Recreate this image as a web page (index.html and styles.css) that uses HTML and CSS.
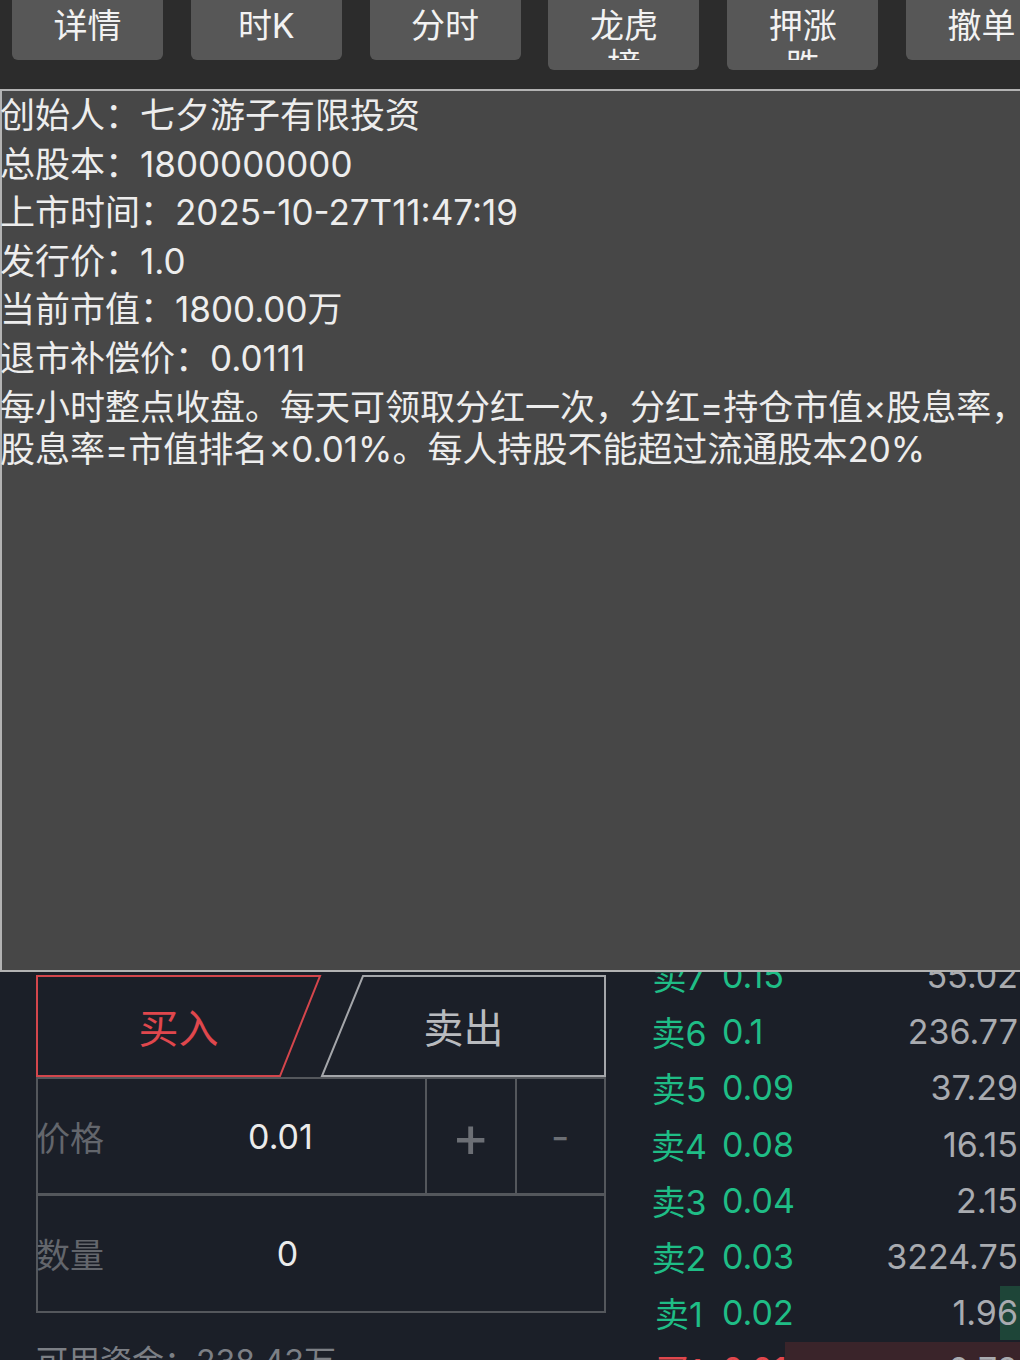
FILE: index.html
```html
<!DOCTYPE html>
<html lang="zh-CN">
<head>
    <meta charset="UTF-8">
    <meta name="viewport" content="width=device-width, initial-scale=1.0">
    <title>股票交易</title>
    <link rel="stylesheet" href="styles.css">
</head>
<body>
    <div class="toolbar">
        <div class="tool"><span>详情</span></div>
        <div class="tool"><span>时K</span></div>
        <div class="tool"><span>分时</span></div>
        <div class="tool tool-tall"><span>龙虎榜</span></div>
        <div class="tool tool-tall"><span>押涨跌</span></div>
        <div class="tool"><span>撤单</span></div>
    </div>

    <!-- chart area, covered by the detail panel -->
    <div class="chart"></div>

    <section class="trade">
        <div class="order-form">
            <div class="side-tabs">
                <svg class="side-shape" viewBox="0 0 570 102" preserveAspectRatio="none">
                    <polygon points="1,1 284,1 244,101 1,101" fill="none" stroke="#d4464c" stroke-width="2"/>
                    <polygon points="327,1 569,1 569,101 286,101" fill="none" stroke="#a4a6aa" stroke-width="2"/>
                </svg>
                <div class="side side-buy">买入</div>
                <div class="side side-sell">卖出</div>
            </div>

            <div class="field-row">
                <div class="field">
                    <span class="field-label">价格</span>
                    <span class="field-value">0.01</span>
                </div>
                <div class="step step-plus">+</div>
                <div class="step step-minus">-</div>
            </div>
            <div class="field-row field-row-last">
                <div class="field">
                    <span class="field-label">数量</span>
                    <span class="field-value field-qty">0</span>
                </div>
            </div>

            <div class="funds">可用资金：238.43万</div>
        </div>

        <div class="book">
            <div class="book-row ask"><span class="lvl">卖7</span><span class="px">0.15</span><span class="vol">55.02</span></div>
            <div class="book-row ask"><span class="lvl">卖6</span><span class="px">0.1</span><span class="vol">236.77</span></div>
            <div class="book-row ask"><span class="lvl">卖5</span><span class="px">0.09</span><span class="vol">37.29</span></div>
            <div class="book-row ask"><span class="lvl">卖4</span><span class="px">0.08</span><span class="vol">16.15</span></div>
            <div class="book-row ask"><span class="lvl">卖3</span><span class="px">0.04</span><span class="vol">2.15</span></div>
            <div class="book-row ask"><span class="lvl">卖2</span><span class="px">0.03</span><span class="vol">3224.75</span></div>
            <div class="book-row ask"><span class="depth" style="width: 20px"></span><span class="lvl">卖1</span><span class="px">0.02</span><span class="vol">1.96</span></div>
            <div class="book-row bid"><span class="depth" style="width: 235px"></span><span class="lvl">买1</span><span class="px">0.01</span><span class="vol">0.79</span></div>
        </div>
    </section>

    <div class="info-panel">
        <p class="info-row">创始人：七夕游子有限投资</p>
        <p class="info-row">总股本：1800000000</p>
        <p class="info-row">上市时间：2025-10-27T11:47:19</p>
        <p class="info-row">发行价：1.0</p>
        <p class="info-row">当前市值：1800.00万</p>
        <p class="info-row">退市补偿价：0.0111</p>
        <p class="info-row">每小时整点收盘。每天可领取分红一次，分红=持仓市值×股息率，股息率=市值排名×0.01%。每人持股不能超过流通股本20%</p>
    </div>
</body>
</html>
```

FILE: styles.css
```css
body {
    font-family: Inter, "Noto Sans CJK SC", sans-serif;
    background-color: #1b1f28;
    margin: 0;
    padding: 0;
    width: 1020px;
    height: 1360px;
    overflow: hidden;
    position: relative;
}

/* top tool buttons */
.toolbar {
    height: 89px;
    background: #2c2c2c;
    display: flex;
    align-items: flex-start;
    gap: 27.8px;
    padding-left: 12px;
    overflow: hidden;
    box-sizing: border-box;
}

.tool {
    flex: none;
    width: 151px;
    height: 74px;
    margin-top: -14px;
    padding-top: 20px;
    box-sizing: border-box;
    background: #575757;
    border-radius: 6px;
    color: #f2f2f2;
    font-size: 34px;
}

.tool-tall {
    height: 84px;
}

.tool span {
    display: block;
    width: 2.3em;
    margin: 0 auto;
    text-align: center;
    line-height: 40px;
    max-height: 54px;
    overflow: hidden;
}

.chart {
    height: 858px;
}

/* detail panel over the chart */
.info-panel {
    position: absolute;
    top: 89px;
    left: 0;
    width: 1060px;
    height: 883px;
    box-sizing: border-box;
    background: #474747;
    border: 2px solid #b3b3b3;
    padding-top: 3px;
    color: #ededed;
    font-size: 35px;
    line-height: 42px;
}

.info-row {
    margin: 0 0 6.6px -2px;
}

/* trade area */
.trade {
    display: flex;
    padding-left: 36px;
}

.order-form {
    width: 570px;
    flex: none;
    margin-top: 28px;
}

.side-tabs {
    position: relative;
    height: 102px;
    display: flex;
}

.side-shape {
    position: absolute;
    left: 0;
    top: 0;
    width: 100%;
    height: 100%;
}

.side {
    flex: 1;
    display: flex;
    align-items: center;
    justify-content: center;
    font-size: 40px;
}

.side-buy {
    color: #e0474d;
}

.side-sell {
    color: #b9bbbf;
}

.field-row {
    display: flex;
    height: 118px;
    border: 2px solid #54575c;
    box-sizing: border-box;
}

.field-row-last {
    border-top-width: 1px;
}

.field {
    width: 387px;
    display: flex;
    align-items: center;
}

.field-label {
    width: 100px;
    margin-left: -2px;
    color: #63666c;
    font-size: 34px;
}

.field-value {
    flex: 1;
    text-align: center;
    color: #ebebeb;
    font-size: 34px;
}

.field-qty {
    padding-left: 14px;
}

.step {
    flex: 1;
    display: flex;
    align-items: center;
    justify-content: center;
    border-left: 2px solid #54575c;
    color: #6c6f75;
    font-size: 58px;
    font-weight: 400;
}

.step-minus {
    font-size: 40px;
}

.funds {
    margin-top: 29px;
    line-height: 40px;
    color: #7c7f85;
    font-size: 32px;
}

/* order book */
.book {
    margin-left: 30px;
    width: 384px;
}

.book-row {
    position: relative;
    display: flex;
    align-items: center;
    height: 56.3px;
    font-size: 34px;
}

.depth {
    position: absolute;
    top: 1px;
    bottom: 1px;
    right: 0;
}

.ask .depth {
    background: #1e4538;
}

.bid .depth {
    background: #3a242a;
}

.lvl,
.px,
.vol {
    position: relative;
}

.lvl {
    width: 86px;
    text-align: center;
}

.px {
    flex: 1;
}

.vol {
    color: #a9abb0;
    padding-right: 2px;
}

.ask .lvl,
.ask .px {
    color: #1fbd86;
}

.bid .lvl,
.bid .px {
    color: #e0474d;
}
```
